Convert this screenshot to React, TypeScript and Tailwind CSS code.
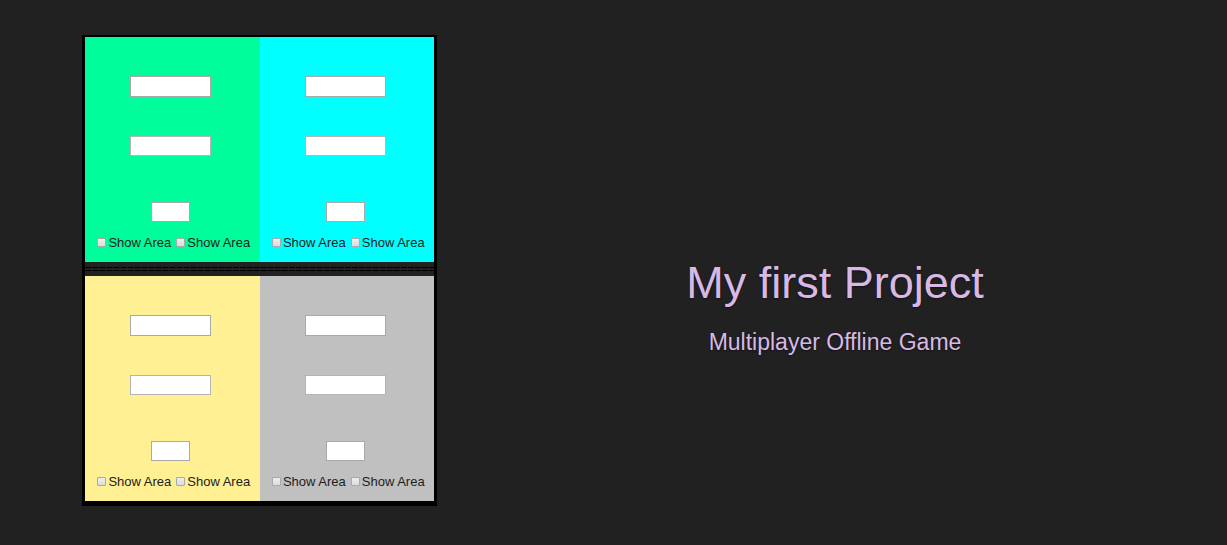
import { useId } from "react";

function AreaToggle() {
  const id = useId();
  return (
    <div className="flex items-center gap-[2px]">
      <input
        id={id}
        type="checkbox"
        className="mb-[2px] size-[9px] appearance-none rounded-[1px] border border-[#a9a9a9] bg-linear-to-b from-[#eeeeee] to-[#dcdcdc] checked:bg-none checked:bg-[#555555]"
      />
      <label htmlFor={id} className="whitespace-nowrap text-[13px] leading-4">
        Show Area
      </label>
    </div>
  );
}

function PlayerPanel({ name, color }: { name: string; color: string }) {
  return (
    <section aria-label={name} className={`flex flex-1 flex-col items-center pt-[39px] pb-[11px] ${color}`}>
      <div className="flex flex-col items-center pr-[3px]">
        <input type="text" aria-label={`${name} width`} className="h-[21px] w-[81px] border border-[#a9a9a9] bg-white px-1 text-xs" />
        <input type="text" aria-label={`${name} height`} className="mt-[39px] h-5 w-[81px] border border-[#b4b4b4] bg-white px-1 text-xs" />
        <input type="text" aria-label={`${name} area`} className="mt-[46px] h-5 w-[39px] border border-[#a9a9a9] bg-white px-1 text-xs" />
      </div>
      <div className="mt-[13px] flex gap-[5px] pl-[3px]">
        <AreaToggle />
        <AreaToggle />
      </div>
    </section>
  );
}

export default function App() {
  return (
    <main className="flex min-h-screen items-start bg-[#212121] pt-[35px] pl-[82px] font-['Liberation_Sans',Arial,sans-serif] text-[#1c1c1c]">
      <div className="w-[355px] shrink-0 border-x-[3px] border-t-2 border-b-[5px] border-black">
        <div className="flex">
          <PlayerPanel name="Player 1" color="bg-[#00fd9b]" />
          <PlayerPanel name="Player 2" color="bg-[#00ffff]" />
        </div>
        <div className="h-[14px] overflow-hidden whitespace-nowrap text-[12px] leading-[14px] text-black">
          {"=".repeat(50)}
        </div>
        <div className="flex">
          <PlayerPanel name="Player 3" color="bg-[#fff094]" />
          <PlayerPanel name="Player 4" color="bg-[#c0c0c0]" />
        </div>
      </div>
      <header className="flex flex-1 flex-col items-center self-center pt-8 pl-[6px] text-center text-[#d8b9e5] [text-shadow:0_1px_2px_rgb(0_0_0/0.5)]">
        <h1 className="text-[45px] leading-[52px]">My first Project</h1>
        <p className="mt-[19px] text-[23px] leading-7">Multiplayer Offline Game</p>
      </header>
    </main>
  );
}
